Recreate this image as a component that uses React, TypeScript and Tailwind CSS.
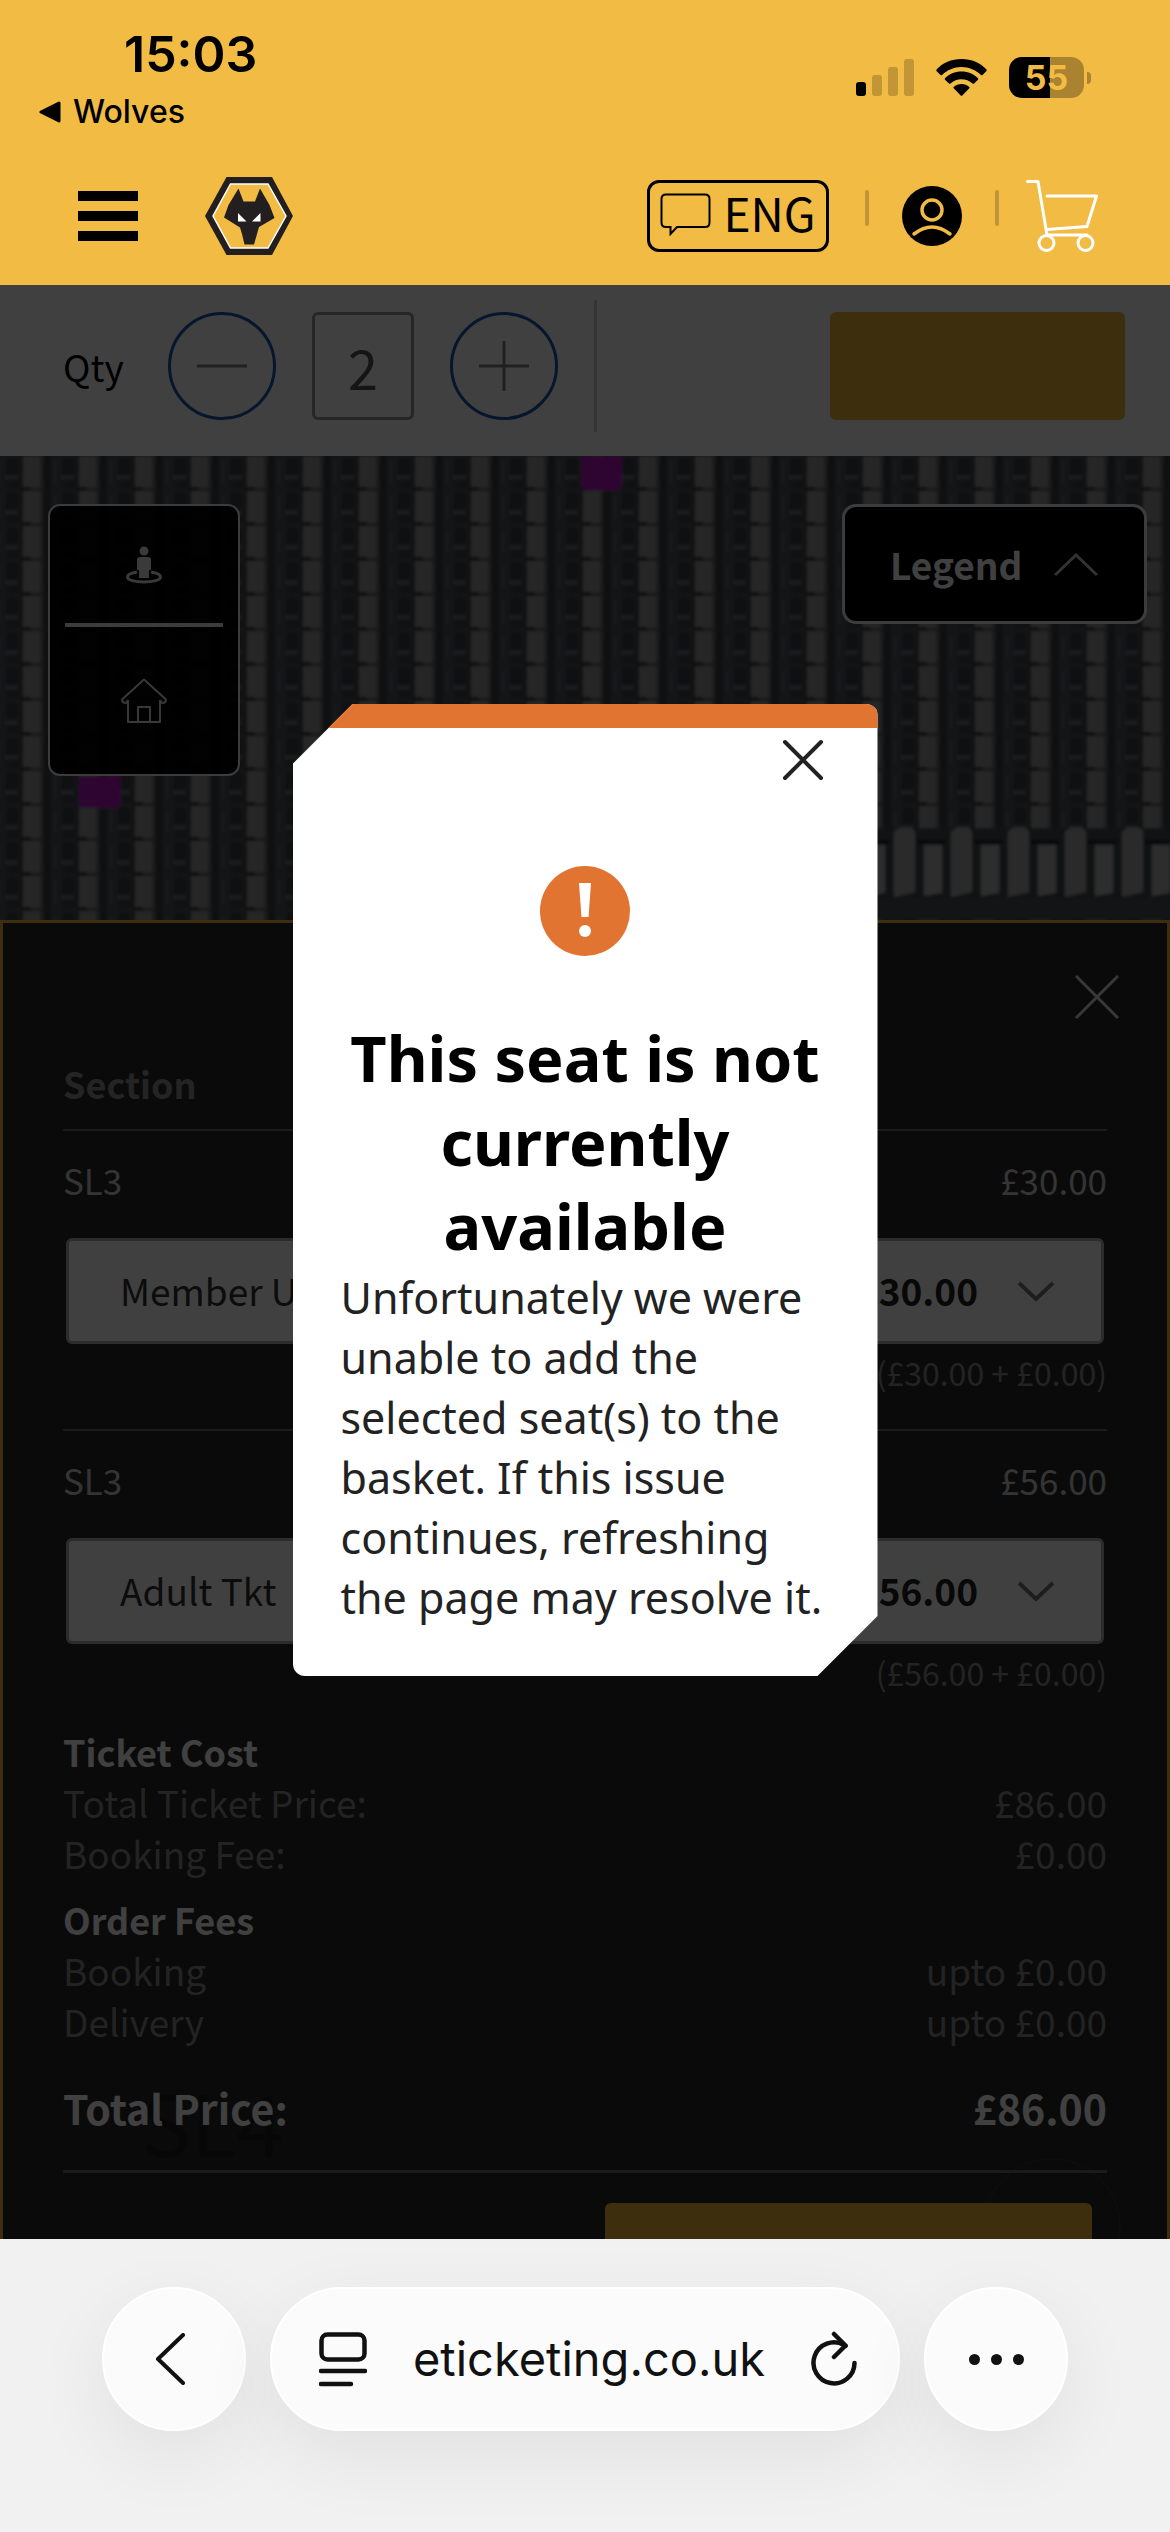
import { useState } from "react";

type Seat = {
  id: string;
  section: string;
  price: string;
  breakdown: string;
  ticketTypes: string[];
};

const seats: Seat[] = [
  {
    id: "seat-1",
    section: "SL3",
    price: "£30.00",
    breakdown: "(£30.00 + £0.00)",
    ticketTypes: ["Member U"],
  },
  {
    id: "seat-2",
    section: "SL3",
    price: "£56.00",
    breakdown: "(£56.00 + £0.00)",
    ticketTypes: ["Adult Tkt"],
  },
];

const costGroups = [
  {
    title: "Ticket Cost",
    lines: [
      { label: "Total Ticket Price:", value: "£86.00" },
      { label: "Booking Fee:", value: "£0.00" },
    ],
  },
  {
    title: "Order Fees",
    lines: [
      { label: "Booking", value: "upto £0.00" },
      { label: "Delivery", value: "upto £0.00" },
    ],
  },
];

function StatusBar() {
  return (
    <div className="flex justify-between pt-6 pr-[79px] font-['Inter',sans-serif] text-black">
      <div>
        <div className="pl-[124px] text-[50px] leading-[60px] font-semibold">
          15:03
        </div>
        <a
          href="#wolves"
          className="mt-2 flex items-center pl-[39px] text-[32px] leading-10 font-medium"
        >
          <svg width="22" height="22" viewBox="0 0 22 22" className="mr-3">
            <path
              d="M2 11 20 2V20Z"
              fill="#000"
              stroke="#000"
              strokeWidth="3"
              strokeLinejoin="round"
            />
          </svg>
          Wolves
        </a>
      </div>
      <div className="mt-[33px] flex h-[41px] items-center">
        <svg width="58" height="37" viewBox="0 0 58 37">
          <rect x="0" y="23" width="10" height="14" rx="3" />
          <g fill="#c29636">
            <rect x="16" y="16" width="10" height="21" rx="3" />
            <rect x="32" y="8" width="10" height="29" rx="3" />
            <rect x="48" y="0" width="10" height="37" rx="3" />
          </g>
        </svg>
        <svg width="51" height="37" viewBox="0 0 51 37" className="ml-[22px]">
          <path d="M25.500 0C35.500 0 44.500 4 50.500 10.500Q51 11.200 50.500 12L46.500 16Q45.700 16.600 45 16C40 11 33 8 25.500 8S11 11 6 16Q5.300 16.600 4.500 16L.5 12Q0 11.200.5 10.500C6.500 4 15.500 0 25.500 0Z" />
          <path d="M25.500 12.500C32 12.500 38 15 42 19.300Q42.500 20 42 20.700L38 24.600Q37.300 25.200 36.600 24.600C33.500 21.700 29.500 20.300 25.500 20.300S17.500 21.700 14.400 24.600Q13.700 25.200 13 24.600L9 20.700Q8.500 20 9 19.300C13 15 19 12.500 25.500 12.500Z" />
          <path d="M25.500 25C28.500 25 31.300 26.100 33.300 27.900Q33.900 28.600 33.300 29.200L26.300 36.500Q25.500 37.200 24.700 36.500L17.700 29.200Q17.100 28.600 17.700 27.900C19.700 26.100 22.500 25 25.500 25Z" />
        </svg>
        <div className="ml-[22px] flex h-[41px] w-[75px] items-center justify-center rounded-[13px] bg-[linear-gradient(90deg,#000_55%,#a9832f_55%)] text-[34px] leading-none font-bold text-[#f1bb44]">
          55
        </div>
        <div className="ml-[3px] h-3 w-1 rounded-r-full bg-[#a9832f]" />
      </div>
    </div>
  );
}

function ClubCrest() {
  return (
    <svg width="88" height="78" viewBox="0 0 88 78">
      <path d="M21.500 0H67L88 39 67 78H21.500L0 39Z" fill="#231f20" />
      <path
        d="M25.500 7H63L81 39 63 71H25.500L8 39Z"
        fill="#f1bb44"
        stroke="#fff"
        strokeWidth="1.500"
      />
      <path
        d="M33.500 11.500 38.500 24.500H50L55 11.500 64.500 28 69.500 41 54 50 52 57 49 67.500H39.500L37 57 35 50.500 19 40.500 23.500 28Z"
        fill="#231f20"
      />
      <path d="M33 36 41.500 44.500H33ZM55.500 36 47 44.500H55.500Z" fill="#fff" />
    </svg>
  );
}

function SiteNav() {
  return (
    <nav className="mt-[15px] flex h-[138px] items-center pr-[72px] pl-[78px]">
      <button aria-label="Menu" className="flex w-[60px] flex-col gap-2.5">
        <span className="h-2.5 bg-black" />
        <span className="h-2.5 bg-black" />
        <span className="h-2.5 bg-black" />
      </button>
      <a href="#home" aria-label="Home" className="ml-[67px]">
        <ClubCrest />
      </a>
      <button className="ml-auto flex h-[72px] w-[182px] items-center justify-center gap-3 rounded-xl border-3 border-black pb-2 font-['Noto_Sans_CJK_SC',sans-serif] text-[46px] leading-none text-black">
        <svg
          width="51"
          height="43"
          viewBox="0 0 51 43"
          fill="none"
          stroke="#000"
          strokeWidth="2"
          className="mt-1 shrink-0"
        >
          <path d="M6 1.500H45Q49.500 1.500 49.500 6V29.500Q49.500 34 45 34H17L10.500 41V34H6Q1.500 34 1.500 29.500V6Q1.500 1.500 6 1.500Z" />
        </svg>
        ENG
      </button>
      <span className="mb-4 ml-9 h-9 w-1 rounded-full bg-[#c0953a]" />
      <a href="#account" aria-label="Account" className="ml-[33px]">
        <svg width="60" height="60" viewBox="0 0 60 60" fill="none">
          <circle cx="30" cy="30" r="30" fill="#000" />
          <g stroke="#f1bb44" strokeWidth="3.500" strokeLinecap="round">
            <circle cx="30" cy="24" r="10" />
            <path d="M12 48Q30 34 48 48" />
          </g>
        </svg>
      </a>
      <span className="mb-4 ml-[33px] h-9 w-1 rounded-full bg-[#c0953a]" />
      <a href="#basket" aria-label="Basket" className="ml-[27px]">
        <svg
          width="72"
          height="72"
          viewBox="0 0 72 72"
          fill="none"
          stroke="#fff"
          strokeWidth="3"
          strokeLinecap="round"
          strokeLinejoin="round"
        >
          <path d="M1.500 1.500H12L21 55H61M21 16H70.500L61 46.500 21 49.500" />
          <circle cx="20.500" cy="63" r="7.500" />
          <circle cx="59.500" cy="63" r="7.500" />
        </svg>
      </a>
    </nav>
  );
}

function QuantityBar() {
  const [quantity, setQuantity] = useState(2);

  return (
    <div className="flex h-[171px] items-start bg-white pt-[27px] pr-[45px] pl-[63px]">
      <label
        htmlFor="quantity"
        className="w-[105px] self-start text-[37px] leading-[108px] text-black"
      >
        Qty
      </label>
      <button
        aria-label="Decrease quantity"
        onClick={() => setQuantity((prev) => Math.max(0, prev - 1))}
        className="flex size-[108px] items-center justify-center rounded-full border-3 border-[#1a58b0]"
      >
        <svg width="50" height="50" viewBox="0 0 50 50" stroke="#808080" strokeWidth="3">
          <path d="M0 25H50" />
        </svg>
      </button>
      <input
        id="quantity"
        value={quantity}
        onChange={(e) => setQuantity(Number.parseInt(e.target.value) || 0)}
        className="ml-9 h-[108px] w-[102px] rounded-md border-3 border-[#999] text-center text-[54px] text-[#555]"
      />
      <button
        aria-label="Increase quantity"
        onClick={() => setQuantity((prev) => prev + 1)}
        className="ml-9 flex size-[108px] items-center justify-center rounded-full border-3 border-[#1a58b0]"
      >
        <svg width="50" height="50" viewBox="0 0 50 50" stroke="#808080" strokeWidth="3">
          <path d="M0 25H50M25 0V50" />
        </svg>
      </button>
      <span className="-mt-3 ml-9 h-[132px] w-[3px] bg-[#d0d0d0]" />
      <button
        aria-label="Continue"
        className="ml-auto h-[108px] w-[295px] rounded-md bg-[#f1b738]"
      />
    </div>
  );
}

function SeatMap() {
  return (
    <div className="relative flex h-[464px] items-start justify-between overflow-hidden bg-[#4b4e54] pt-12 pr-[23px] pl-12">
      <svg className="absolute inset-0 h-full w-full" aria-hidden="true">
        <defs>
          <filter id="soft" x="0" y="0" width="100%" height="100%">
            <feGaussianBlur stdDeviation="1.500" />
          </filter>
          <pattern id="rows" x="23" y="0" width="56" height="35" patternUnits="userSpaceOnUse">
            <rect width="56" height="35" fill="#4f5258" />
            <rect width="19" height="35" fill="#989898" />
            <rect x="17" width="3" height="35" fill="#6e6e6e" />
            <rect x="21" width="7" height="35" fill="#3e4044" />
            <rect x="31" y="4" width="3" height="24" fill="#60646a" />
            <rect x="39" y="1" width="12" height="18" rx="5" fill="#3a3f48" />
            <rect x="40" y="24" width="12" height="9" rx="3" fill="#40444e" />
            <rect x="38" y="20" width="12" height="3" fill="#74787e" />
            <rect x="52" width="4" height="35" fill="#44474c" />
            <rect y="31" width="8" height="4" fill="#303030" />
            <rect x="8" y="32" width="11" height="3" fill="#5c5c5c" />
          </pattern>
          <pattern id="front" x="34" y="0" width="57" height="80" patternUnits="userSpaceOnUse">
            <rect width="57" height="80" fill="#44494f" />
            <rect x="23" y="12" width="29" height="4" fill="#202020" />
            <path d="M0 4 5 0H18L21 4V64L0 69Z" fill="#a8a8a8" />
            <path d="M30 17H48V65L30 68Z" fill="#b4b4b4" />
          </pattern>
        </defs>
        <g filter="url(#soft)">
          <rect x="-10" y="-10" width="110%" height="110%" fill="url(#rows)" />
          <svg x="860" y="372" width="400" height="92">
            <rect width="400" height="76" fill="url(#front)" />
            <rect y="70" width="400" height="30" fill="#4a5058" />
          </svg>
          <path d="M79 320H121V344Q121 352 113 352H79Z" fill="#b414c0" />
          <path d="M581 0H622V27Q622 35 614 35H589Q581 35 581 27Z" fill="#b414c0" />
        </g>
      </svg>

      <div className="relative w-48 rounded-xl border-2 border-[#f0f0f0] bg-black/95">
        <button
          aria-label="Seat view"
          className="flex h-[117px] w-full items-center justify-center"
        >
          <svg width="36" height="38" viewBox="0 0 36 38" fill="#e8e8e8">
            <circle cx="18" cy="5" r="4.500" />
            <path d="M14 11H22Q25 11 25 14V24H23V32H13V24H11V14Q11 11 14 11Z" />
            <path
              d="M11 26C4 27 1.500 29 1.500 31 1.500 34 9 36 18 36S34.500 34 34.500 31C34.500 29 32 27 25 26"
              fill="none"
              stroke="#e8e8e8"
              strokeWidth="3"
            />
          </svg>
        </button>
        <hr className="mx-[15px] border-t-4 border-[#f0f0f0]" />
        <button
          aria-label="Reset map"
          className="flex h-[147px] w-full items-center justify-center"
        >
          <svg
            width="46"
            height="46"
            viewBox="0 0 46 46"
            fill="none"
            stroke="#e0e0e0"
            strokeWidth="2"
            strokeLinejoin="round"
          >
            <path d="M7 22V44H39V22M17 44V29H29V44M7 22 5 25Q1 25 1 21.500L23 1.500 45 21.500Q45 25 41 25L39 22" />
          </svg>
        </button>
      </div>

      <button className="relative flex h-[120px] w-[305px] items-center justify-between rounded-[14px] border-3 border-[#f0f0f0] bg-black pr-[46px] pl-[45px] text-[37px] leading-none font-bold text-white">
        Legend
        <svg width="44" height="26" viewBox="0 0 44 26" fill="none" stroke="#ccc" strokeWidth="3">
          <path d="M1 24 22 4 43 24" />
        </svg>
      </button>
    </div>
  );
}

function SeatRow({ seat, last }: { seat: Seat; last: boolean }) {
  return (
    <div className={last ? "pt-[25px] pb-[30px]" : "border-b-2 border-[#6c6c6c] pt-[25px] pb-[33px]"}>
      <div className="flex justify-between text-[35px] leading-[48px] text-[#d0d0d0]">
        <span>{seat.section}</span>
        <span>{seat.price}</span>
      </div>
      <div className="relative mx-[3px] mt-[34px]">
        <select
          aria-label={`Ticket type for ${seat.section}`}
          className="h-[106px] w-full appearance-none rounded-md border-3 border-[#b0b0b0] bg-white pl-[51px] text-[37px] text-[#333]"
        >
          {seat.ticketTypes.map((type) => (
            <option key={type}>{type}</option>
          ))}
        </select>
        <div className="pointer-events-none absolute inset-y-0 right-[50px] flex items-center gap-10 text-[37px] font-bold text-[#222]">
          {seat.price}
          <svg width="36" height="22" viewBox="0 0 36 22" fill="none" stroke="#777" strokeWidth="4">
            <path d="M1 3 18 19 35 3" />
          </svg>
        </div>
      </div>
      <p className="mt-1 text-right text-[32px] leading-[48px] text-[#8c8c8c]">
        {seat.breakdown}
      </p>
    </div>
  );
}

function BasketSheet() {
  return (
    <section className="relative overflow-hidden border-3 border-b-0 border-[#f1b738] bg-[#282828] px-[60px]">
      <span className="absolute bottom-[76px] left-[138px] text-[84px] leading-none text-[#1c1c1c]">
        SL4
      </span>
      <span className="absolute right-[46px] -bottom-[57px] size-[138px] rounded-full border-2 border-[#343434]" />
      <div className="relative">
        <div className="flex justify-end pt-[52px]">
          <button aria-label="Close basket" className="-mr-3">
            <svg width="44" height="44" viewBox="0 0 44 44" stroke="#ddd" strokeWidth="3">
              <path d="M1 1 43 43M43 1 1 43" />
            </svg>
          </button>
        </div>
        <h2 className="mt-10 border-b-2 border-[#6c6c6c] pb-[22px] text-[36px] leading-[48px] font-bold text-[#909090]">
          Section
        </h2>
        {seats.map((seat, index) => (
          <SeatRow key={seat.id} seat={seat} last={index === seats.length - 1} />
        ))}
        <div className="flex flex-col gap-[15px]">
          {costGroups.map((group) => (
            <div key={group.title} className="text-[37px] leading-[51px]">
              <h3 className="text-[36px] font-bold text-white">{group.title}</h3>
              {group.lines.map((line) => (
                <div key={line.label} className="flex justify-between text-[#8c8c8c]">
                  <span>{line.label}</span>
                  <span>{line.value}</span>
                </div>
              ))}
            </div>
          ))}
        </div>
        <div className="mt-[30px] flex justify-between border-b-3 border-[#6c6c6c] pb-[33px] text-[41px] leading-[60px] font-bold text-white">
          <span>Total Price:</span>
          <span>£86.00</span>
        </div>
        <div className="flex justify-end pt-[30px] pr-[15px]">
          <button
            aria-label="Checkout"
            className="h-9 w-[487px] rounded-t-md bg-[#f1b738]"
          />
        </div>
      </div>
    </section>
  );
}

function SeatUnavailableDialog() {
  return (
    <div className="absolute inset-0 flex items-start justify-center bg-black/75 pt-[419px]">
      <div
        role="alertdialog"
        aria-labelledby="dialog-title"
        className="w-1/2 overflow-hidden rounded-xl bg-white font-['Noto_Sans',sans-serif] [clip-path:polygon(60px_0,100%_0,100%_calc(100%-60px),calc(100%-60px)_100%,0_100%,0_60px)]"
      >
        <div className="h-6 bg-[#e27432]" />
        <div className="flex justify-end pt-2 pr-[51px]">
          <button aria-label="Close">
            <svg
              width="48"
              height="48"
              viewBox="0 0 48 48"
              stroke="#222"
              strokeWidth="4"
              strokeLinecap="round"
            >
              <path d="M6 6 42 42M42 6 6 42" />
            </svg>
          </button>
        </div>
        <div className="flex flex-col items-center px-12 pt-[82px] pb-12">
          <svg width="90" height="90" viewBox="0 0 90 90">
            <circle cx="45" cy="45" r="45" fill="#e27432" />
            <path d="M39 17H51L48.500 51H41.500Z" fill="#fff" />
            <circle cx="45" cy="65" r="6" fill="#fff" />
          </svg>
          <h1
            id="dialog-title"
            className="mt-[60px] text-center text-[63px] leading-[84px] font-bold text-black"
          >
            This seat is not currently available
          </h1>
          <p className="w-full text-[43px] leading-[60px] text-[#222]">
            Unfortunately we were unable to add the selected seat(s) to the
            basket. If this issue continues, refreshing the page may resolve it.
          </p>
        </div>
      </div>
    </div>
  );
}

function BrowserBar() {
  return (
    <footer className="flex grow items-start gap-6 bg-[#f1f1f1] px-[102px] pt-12 pb-[100px] font-['Inter',sans-serif] text-[#111]">
      <button
        aria-label="Back"
        className="flex size-36 shrink-0 items-center justify-center rounded-full border-2 border-white bg-[#fbfbfb] pr-2 shadow-[0_24px_80px_rgba(0,0,0,0.07)]"
      >
        <svg
          width="30"
          height="52"
          viewBox="0 0 30 52"
          fill="none"
          stroke="#111"
          strokeWidth="4"
          strokeLinecap="round"
          strokeLinejoin="round"
        >
          <path d="M28 2 3 26 28 50" />
        </svg>
      </button>
      <div className="flex h-36 grow items-center justify-between rounded-full border-2 border-white bg-[#fbfbfb] pr-[41px] pl-[47px] shadow-[0_24px_80px_rgba(0,0,0,0.07)]">
        <button aria-label="Page settings">
          <svg width="48" height="56" viewBox="0 0 48 56" fill="none" stroke="#111" strokeWidth="4.500">
            <rect x="2.500" y="3.500" width="43" height="25" rx="6" />
            <path d="M2 40H46M2 53H32" strokeLinecap="round" />
          </svg>
        </button>
        <a href="#address" className="text-[47px] leading-[60px]">
          eticketing.co.uk
        </a>
        <button aria-label="Reload">
          <svg
            width="46"
            height="56"
            viewBox="0 0 46 56"
            fill="none"
            stroke="#111"
            strokeWidth="4.500"
            strokeLinecap="round"
            strokeLinejoin="round"
          >
            <path d="M43.500 32A20.500 20.500 0 1 1 33 14L34.500 15" />
            <path d="M23 3 34.500 14.500 23 26" />
          </svg>
        </button>
      </div>
      <button
        aria-label="More"
        className="flex size-36 shrink-0 items-center justify-center gap-[11px] rounded-full border-2 border-white bg-[#fbfbfb] shadow-[0_24px_80px_rgba(0,0,0,0.07)]"
      >
        <span className="size-[11px] rounded-full bg-[#111]" />
        <span className="size-[11px] rounded-full bg-[#111]" />
        <span className="size-[11px] rounded-full bg-[#111]" />
      </button>
    </footer>
  );
}

export default function App() {
  return (
    <div className="flex min-h-screen flex-col bg-[#f1f1f1]">
      <header className="bg-[#f1bb44]">
        <StatusBar />
        <SiteNav />
      </header>
      <main className="relative font-['Noto_Sans_CJK_SC',sans-serif]">
        <QuantityBar />
        <SeatMap />
        <BasketSheet />
        <SeatUnavailableDialog />
      </main>
      <BrowserBar />
    </div>
  );
}
